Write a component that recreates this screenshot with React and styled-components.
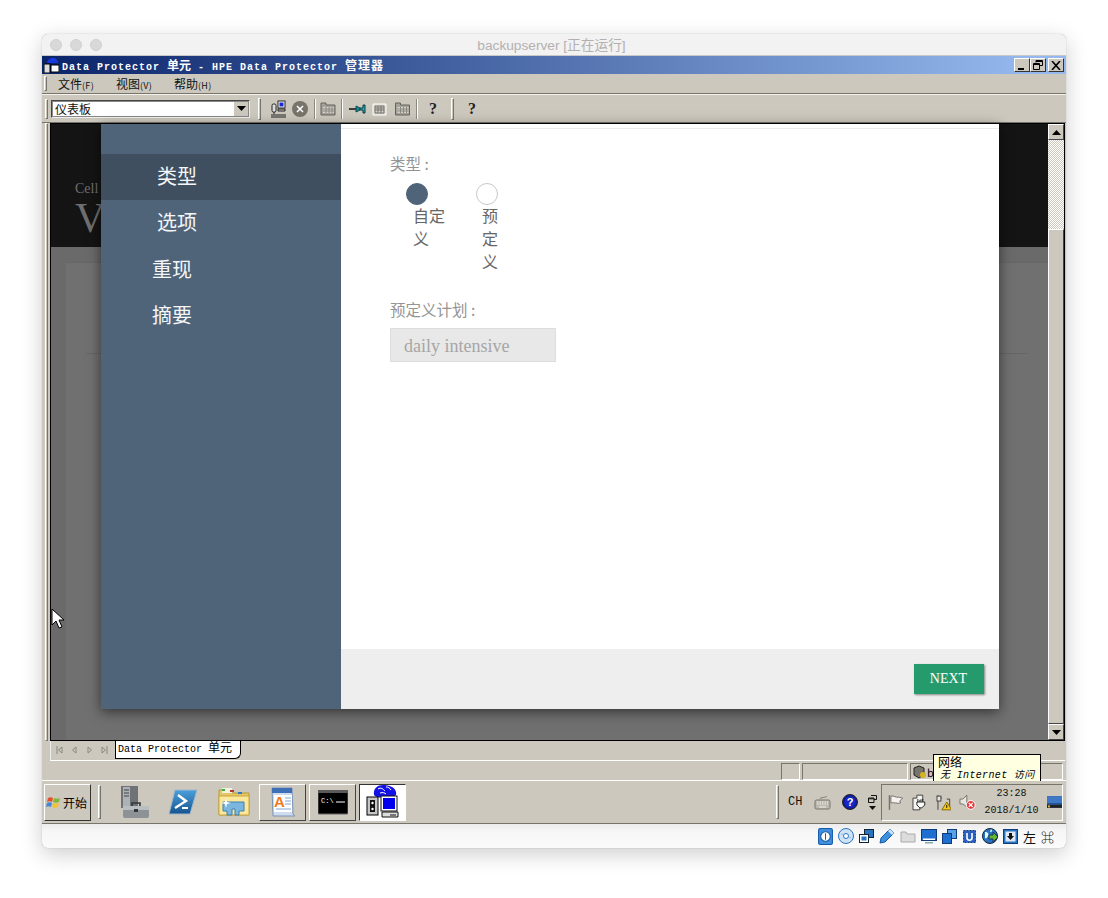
import React from 'react'
import styled, { createGlobalStyle } from 'styled-components'

const chrome = '#ccc8bd'
const cjk = '"Noto Sans CJK SC", "DejaVu Sans", sans-serif'
const serif = '"Liberation Serif", "Noto Sans CJK SC", serif'
const mono = '"Liberation Mono", "Noto Sans CJK SC", monospace'

const Global = createGlobalStyle`
html, body { margin: 0; padding: 0; background: #fff; }
body { width: 1108px; height: 898px; overflow: hidden; font-family: ${cjk}; }
* { box-sizing: border-box; }
`

const MacWindow = styled.div`
position: relative;
width: 1024px;
height: 814px;
margin: 34px 0 0 42px;
border-radius: 6px;
overflow: hidden;
box-shadow: 0 0 1px rgba(0,0,0,.35), 0 6px 22px rgba(0,0,0,.2);
display: flex;
flex-direction: column;
background: ${chrome};
`
const MacBar = styled.div`
height: 22px;
flex: none;
background: #f2f2f2;
border-bottom: 1px solid #c8c8c8;
display: flex;
align-items: center;
padding-left: 8px;
gap: 8px;
`
const Light = styled.span`
width: 12px;
height: 12px;
border-radius: 50%;
background: #d9d9d9;
border: 1px solid #cfcfcf;
`
const MacTitle = styled.div`
flex: 1;
text-align: center;
margin: -2px 73px 0 0;
font-size: 13.7px;
color: #b4b0b0;
font-family: "Liberation Sans", ${cjk};
`
const TitleBar = styled.div`
height: 18px;
flex: none;
background: linear-gradient(90deg, #0a246a 0%, #95b9ee 97%);
display: flex;
align-items: center;
padding: 0 2px;
`
const TitleText = styled.div`
flex: 1;
color: #fff;
font: bold 10px ${mono};
margin-left: 3px;
letter-spacing: 1px;
white-space: nowrap;
`
const CjkRun = styled.span`
font-size: 12px;
font-weight: ${p => (p.$normal ? 400 : 700)};
letter-spacing: ${p => p.$ls || 0}px;
`
const CaptionButton = styled.div`
width: 16px;
height: 14px;
margin-left: ${p => p.$gap || 0}px;
background: ${chrome};
border: 1px solid;
border-color: #fff #333 #333 #fff;
display: flex;
align-items: center;
justify-content: center;
`
const MenuBar = styled.div`
height: 20px;
flex: none;
border-bottom: 1px solid #77746c;
display: flex;
align-items: center;
font-size: 12px;
color: #111;
padding-left: 2px;
`
const Grip = styled.span`
width: 3px;
height: ${p => p.$h || 14}px;
flex: none;
border: 1px solid;
border-color: #fff #77746c #77746c #fff;
margin: 0 ${p => p.$right || 0}px 0 ${p => p.$left || 0}px;
`
const MenuItem = styled.span`
width: 58px;
white-space: nowrap;
small { font-size: 9px; letter-spacing: .3px; }
`
const ToolBar = styled.div`
height: 29px;
flex: none;
border-top: 1px solid #f4f2ea;
border-bottom: 1px solid #77746c;
display: flex;
align-items: center;
padding-left: 3px;
`
const Combo = styled.div`
width: 199px;
height: 18px;
margin-left: 3px;
background: #fff;
border: 1px solid;
border-color: #444 #eee #eee #444;
outline: 1px solid #888;
outline-offset: -2px;
display: flex;
justify-content: space-between;
align-items: center;
font-size: 12px;
color: #111;
padding-left: 3px;
`
const ComboArrow = styled.span`
width: 16px;
height: 16px;
background: ${chrome};
border: 1px solid;
border-color: #fff #333 #333 #fff;
display: flex;
align-items: center;
justify-content: center;
`
const ToolIcon = styled.span`
display: flex;
margin-left: ${p => p.$left}px;
`
const Divider = styled.span`
width: 2px;
height: 20px;
background: #8b887f;
border-right: 1px solid #fff;
margin-left: ${p => p.$left}px;
flex: none;
`
const Question = styled.span`
font: bold 16px "Liberation Serif", serif;
color: #222;
margin-left: ${p => p.$left}px;
line-height: 1;
`
const ViewRow = styled.div`
height: 618px;
flex: none;
display: flex;
padding-left: 3px;
padding-right: 1px;
`
const ViewGrip = styled.div`
width: 3px;
flex: none;
margin-right: 2px;
border: 1px solid;
border-color: #fff #77746c #77746c #fff;
`
const Screen = styled.div`
position: relative;
flex: 1;
display: flex;
flex-direction: column;
background: #6a6a6a;
border-left: 1px solid #000;
border-top: 1px solid #000;
border-bottom: 1px solid #000;
min-width: 0;
`
const PageHead = styled.div`
height: 123px;
flex: none;
background: #141414;
padding: 56px 0 0 24px;
font-family: ${serif};
color: #6f6f6f;
`
const PageCell = styled.div`
font-size: 14px;
line-height: 18px;
`
const PageTitle = styled.div`
font-size: 42px;
line-height: 41px;
`
const PagePanel = styled.div`
flex: 1;
margin: 15px 0 0 15px;
background: #707070;
border-top: 1px solid #666;
padding-top: 90px;
`
const PageRule = styled.div`
height: 1px;
margin: 0 20px;
background: #666;
`
const Modal = styled.div`
position: absolute;
left: 50px;
top: 0;
width: 898px;
height: 585px;
display: flex;
box-shadow: 0 3px 12px rgba(0,0,0,.55);
`
const Side = styled.div`
width: 240px;
flex: none;
background: #4f6479;
padding-top: 30px;
color: #f4f6f8;
font: 20px/46.3px ${serif};
`
const SideItem = styled.div`
height: 46.3px;
padding-left: ${p => (p.$active || p.$indent ? 56 : 51)}px;
background: ${p => (p.$active ? '#3f4f5f' : 'transparent')};
`
const Main = styled.div`
flex: 1;
display: flex;
flex-direction: column;
background: #fff;
`
const MainBody = styled.div`
flex: 1;
padding: 27px 0 0 49px;
position: relative;
&::before {
  content: "";
  position: absolute;
  left: 0;
  right: 0;
  top: 4px;
  height: 1px;
  background: #ececec;
}
`
const FieldLabel = styled.div`
font-size: 15.5px;
line-height: 24px;
color: #949494;
`
const RadioRow = styled.div`
display: flex;
margin: 8px 0 0 16px;
height: 114px;
`
const RadioOption = styled.div`
width: ${p => p.$w}px;
`
const RadioDot = styled.div`
width: 22px;
height: 22px;
border-radius: 50%;
background: ${p => (p.$on ? '#4f6479' : '#fff')};
border: 1px solid ${p => (p.$on ? '#4f6479' : '#c8c8c8')};
`
const RadioText = styled.div`
font-size: 16px;
line-height: 23px;
color: #666;
margin-top: -1px;
padding-left: ${p => p.$pad}px;
width: ${p => p.$tw}px;
`
const Select = styled.div`
width: 166px;
height: 34px;
margin-top: 7px;
background: #e8e8e8;
border: 1px solid #ddd;
padding-left: 13px;
font: 18px/34px ${serif};
color: #a6a6a6;
`
const Footer = styled.div`
height: 60px;
flex: none;
background: #eee;
display: flex;
justify-content: flex-end;
align-items: flex-start;
padding: 15px 15px 0 0;
`
const Next = styled.button`
width: 70px;
height: 30px;
border: 0;
background: #259b6d;
color: #fff;
font: 14px ${serif};
box-shadow: 1px 1px 2px rgba(0,0,0,.45);
padding: 0 1px 0 0;
`
const Cursor = styled.svg`
position: absolute;
left: 0;
top: 484px;
`
const ScrollBar = styled.div`
width: 17px;
flex: none;
display: flex;
flex-direction: column;
border-top: 1px solid #000;
border-bottom: 1px solid #000;
border-right: 1px solid #000;
`
const ScrollButton = styled.div`
height: 16px;
flex: none;
background: ${chrome};
border: 1px solid;
border-color: #fff #444 #444 #fff;
display: flex;
align-items: center;
justify-content: center;
`
const ScrollTrack = styled.div`
height: 89px;
flex: none;
background: repeating-conic-gradient(#ccc8bd 0 25%, #fff 0 50%) 0 0 / 2px 2px;
`
const ScrollThumb = styled.div`
flex: 1;
background: ${chrome};
border: 1px solid;
border-color: #fff #444 #444 #fff;
`
const TabRow = styled.div`
height: 20px;
flex: none;
display: flex;
margin-left: 8px;
margin-right: 1px;
border-left: 1px solid #eee;
border-bottom: 1px solid #fff;
align-items: flex-start;
`
const TabNav = styled.div`
width: 64px;
height: 18px;
display: flex;
align-items: center;
gap: 8px;
padding-left: 5px;
`
const Tab = styled.div`
width: 126px;
height: 18px;
background: #fff;
border: 1px solid #000;
border-top: 0;
border-bottom-right-radius: 6px;
font: 10px/17px ${mono};
color: #000;
padding-left: 2px;
white-space: nowrap;
`
const StatusRow = styled.div`
height: 20px;
flex: none;
display: flex;
align-items: flex-start;
padding: 2px 1px 0 739px;
border-bottom: 1px solid #fff;
position: relative;
`
const StatusCell = styled.div`
width: ${p => p.$w}px;
flex: ${p => (p.$grow ? 1 : 'none')};
height: 17px;
margin-right: 2px;
border: 1px solid;
border-color: #77746c #fff #fff #77746c;
display: flex;
align-items: center;
font-size: 11px;
padding-left: 2px;
overflow: hidden;
`
const Tooltip = styled.div`
position: absolute;
left: 891px;
top: -7px;
width: 108px;
height: 27px;
background: #ffffe1;
border: 1px solid #000;
border-bottom: 0;
font-size: 12px;
line-height: 14px;
padding-left: 4px;
color: #000;
white-space: nowrap;
overflow: hidden;
em { display: block; font: italic 10px/13px ${mono}, ${cjk}; padding-left: 2px; letter-spacing: .35px; }
`
const TaskBar = styled.div`
height: 43px;
flex: none;
border-bottom: 1px solid #77746c;
display: flex;
align-items: center;
padding-left: 2px;
`
const StartButton = styled.div`
width: 47px;
height: 37px;
background: ${chrome};
border: 1px solid;
border-color: #fff #333 #333 #fff;
display: flex;
align-items: center;
font-size: 12px;
color: #000;
padding-left: 1px;
gap: 1px;
`
const TaskSlot = styled.div`
width: ${p => p.$w || 47}px;
height: 37px;
margin-left: ${p => p.$left || 0}px;
flex: none;
display: flex;
align-items: center;
justify-content: center;
${p => p.$raised && 'border: 1px solid; border-color: #fff #444 #444 #fff;'}
${p => p.$pressed && 'background: #fff; border: 1px solid; border-color: #333 #fff #fff #333;'}
`
const TaskSep = styled.span`
width: 3px;
height: 34px;
flex: none;
margin-left: ${p => p.$left}px;
border: 1px solid;
border-color: #fff #77746c #77746c #fff;
`
const LangText = styled.span`
font: 12px ${mono};
margin-left: 9px;
color: #111;
`
const TrayBox = styled.div`
width: 182px;
height: 37px;
margin-left: 4px;
border: 1px solid;
border-color: #77746c #fff #fff #77746c;
display: flex;
align-items: center;
padding-left: 6px;
gap: 8px;
`
const Clock = styled.div`
width: 56px;
text-align: center;
font: 10px/17px ${mono};
color: #111;
white-space: nowrap;
`
const MiniGroup = styled.div`
display: flex;
flex-direction: column;
align-items: center;
margin-left: 10px;
gap: 3px;
`
const HostBar = styled.div`
flex: 1;
background: linear-gradient(#ececec, #f6f6f6 30%, #fbfbfb);
display: flex;
align-items: center;
justify-content: flex-end;
gap: 5px;
padding-right: 12px;
`
const HostKey = styled.span`
font-size: 13px;
color: #111;
`

const Arrow = ({ up }) => (
  <svg width="9" height="5" viewBox="0 0 9 5"><path d={up ? 'M4.5 0L9 5H0z' : 'M0 0h9L4.5 5z'} fill="#000" /></svg>
)

const PcIcon = () => (
  <svg width="15" height="18" viewBox="0 0 15 18" fill="none">
    <rect x="7" y="1" width="7" height="7" fill="#fff" stroke="#222" />
    <rect x="8.5" y="2.5" width="4" height="4" fill="#1c28d8" />
    <rect x="1" y="4" width="4" height="8" rx="1.5" fill="#ddd" stroke="#222" />
    <path d="M7 9h7v2H7zM3 12v2M0 15h15M0 17h15" stroke="#222" />
  </svg>
)
const StopIcon = () => (
  <svg width="16" height="16" viewBox="0 0 16 16">
    <circle cx="8" cy="8" r="8" fill="#77746c" />
    <path d="M5 5l6 6M11 5l-6 6" stroke="#fff" strokeWidth="1.6" />
  </svg>
)
const FolderGrid = ({ w = 16 }) => (
  <svg width={w} height="14" viewBox="0 0 16 14">
    <path d="M1 3V1h5v2h9v10H1z" fill="#a5a29a" stroke="#66635c" />
    <path d="M3 5h11v6H3z" fill="#d6d3cb" />
    <path d="M3 7h11M3 9h11M6 5v6M9 5v6M12 5v6" stroke="#8a877f" />
  </svg>
)
const PinIcon = () => (
  <svg width="17" height="10" viewBox="0 0 17 10">
    <path d="M0 5h7" stroke="#111" strokeWidth="1.5" />
    <path d="M7 2l4 2v2l-4 2z" fill="#138a96" stroke="#0c4a50" />
    <path d="M11 4h3V1h2v8h-2V6h-3z" fill="#20b2bd" stroke="#0a3a3e" />
  </svg>
)
const TableIcon = () => (
  <svg width="15" height="14" viewBox="0 0 15 14" fill="none">
    <path d="M1 2h13v11H1z" fill="#d6d3cb" stroke="#fff" />
    <path d="M3 4h9v7H3zM3 6h9M3 8h9M6 4v7M9 4v7" stroke="#77746c" />
  </svg>
)

const ServerCase = () => (
  <svg width="32" height="34" viewBox="0 0 32 34">
    <path d="M2 1h17v22H2z" fill="#6f7276" />
    <path d="M4 2h7v20H4z" fill="#aeb2b6" />
    <path d="M5 5h5M5 8h5M5 11h5" stroke="#3e4144" />
    <path d="M4 21h26v10a2 2 0 0 1-2 2H6a2 2 0 0 1-2-2z" fill="#8d9297" />
    <path d="M4 21h26v4H4z" fill="#b9bec2" />
    <path d="M13 21v-3h8v3" fill="none" stroke="#33363a" strokeWidth="1.6" />
    <rect x="15" y="24" width="4" height="3" fill="#33363a" />
  </svg>
)
const PowerShellIcon = () => (
  <svg width="30" height="26" viewBox="0 0 30 26">
    <defs>
      <linearGradient id="ps" x1="0" y1="0" x2="0" y2="1">
        <stop offset="0" stopColor="#4aa0dc" />
        <stop offset="1" stopColor="#15548f" />
      </linearGradient>
    </defs>
    <path d="M7 1h22l-7 24H1z" fill="url(#ps)" stroke="#9fb7cc" />
    <path d="M10 6l8 6-11 7" fill="none" stroke="#fff" strokeWidth="2.4" />
    <path d="M14 19h6" stroke="#fff" strokeWidth="2" />
  </svg>
)
const ExplorerIcon = () => (
  <svg width="32" height="30" viewBox="0 0 32 30">
    <path d="M1 3h11l2 3h17v22H1z" fill="#e6c765" stroke="#b79a3c" />
    <path d="M4 1h10v5H4z" fill="#f6f2e2" />
    <path d="M4 2h3v2H4z" fill="#3fae3c" />
    <path d="M12 3h4v2h-4z" fill="#b23a2c" />
    <path d="M20 5h4v2h-4z" fill="#2c79c9" />
    <path d="M1 9h30v19H1z" fill="#fbe89b" stroke="#c7a540" />
    <path d="M5 24v-9h21v9h-5v4h-4v-6h-3v6H9v-4z" fill="#7bb6df" stroke="#3d7fb3" />
    <path d="M8 11l1 4 4 1-4 1-1 4-1-4-4-1 4-1z" fill="#fff" />
  </svg>
)
const FontDocIcon = () => (
  <svg width="26" height="30" viewBox="0 0 26 30">
    <path d="M2 1h20l1 26 2 2H3z" fill="#cfdcf0" stroke="#7a93b8" />
    <path d="M2 1h20v5H2z" fill="#3c6fb5" />
    <path d="M4 8h18v17H4z" fill="#fff" />
    <text x="4" y="20" fontFamily="Liberation Sans, sans-serif" fontWeight="bold" fontSize="15" fill="#ee7b1d">A</text>
    <path d="M15 11h6M15 14h6M15 17h6M6 22h15" stroke="#7ea5d8" />
  </svg>
)
const CmdIcon = () => (
  <svg width="30" height="25" viewBox="0 0 30 25">
    <rect x="0" y="0" width="30" height="24" rx="1" fill="#000" stroke="#666" />
    <path d="M0 0h30v3H0z" fill="#5a5a5a" />
    <text x="3" y="13" fontFamily="Liberation Mono, monospace" fontSize="7" fill="#fff">C:\</text>
    <path d="M18 12h9" stroke="#fff" />
  </svg>
)
const DpIcon = () => (
  <svg width="34" height="34" viewBox="0 0 34 34">
    <path d="M8 10C7 3 12 0 17 0c6 0 12 2 13 7 1 4-2 5-6 5-5 0-13 2-16-2z" fill="#1212e6" />
    <path d="M12 4c3-2 5 0 7 2M14 8c3-1 5 0 6 1M20 2c2 0 4 1 5 3" stroke="#fff" fill="none" />
    <rect x="1" y="12" width="11" height="18" fill="#c6c6c6" stroke="#000" />
    <rect x="4" y="15" width="5" height="12" fill="#111" />
    <circle cx="6.5" cy="18" r="1.2" fill="#fff" />
    <circle cx="6.5" cy="24" r="1.2" fill="#fff" />
    <rect x="15" y="11" width="16" height="15" fill="#fff" stroke="#111" />
    <rect x="17" y="13" width="12" height="11" fill="#0000ee" />
    <path d="M16 27h16v5H16z" fill="#ddd" stroke="#111" />
    <path d="M24 30h6" stroke="#111" />
  </svg>
)
const StartFlag = () => (
  <svg width="16" height="15" viewBox="0 0 16 15">
    <path d="M2 3c2-1 3-1 5 0L6 7C4 6 3 6 1 7z" fill="#e5502a" />
    <path d="M8 3c2 1 4 1 6 0l-1 4c-2 1-4 1-6 0z" fill="#7fb738" />
    <path d="M1 8c2-1 3-1 5 0l-1 4c-2-1-3-1-5 0z" fill="#3d88d8" />
    <path d="M7 8c2 1 4 1 6 0l-1 4c-2 1-4 1-6 0z" fill="#f3c22e" />
  </svg>
)
const KeyboardIcon = () => (
  <svg width="17" height="15" viewBox="0 0 17 15" fill="none">
    <path d="M6 4c0-2 6-1 7-3" stroke="#807d75" />
    <rect x="1" y="5" width="15" height="9" rx="1.5" fill="#bbb8af" stroke="#77746c" />
    <path d="M3 7h11M3 9h11" stroke="#f0eee8" strokeDasharray="1.5 1" />
    <path d="M5 12h7" stroke="#f0eee8" />
  </svg>
)
const HelpDisc = () => (
  <svg width="16" height="16" viewBox="0 0 16 16">
    <circle cx="8" cy="8" r="7.5" fill="#101c9c" stroke="#222" />
    <circle cx="8" cy="8" r="5.5" fill="#1828c4" />
    <text x="8" y="12" textAnchor="middle" fontFamily="Liberation Sans, sans-serif" fontWeight="bold" fontSize="11" fill="#fff">?</text>
  </svg>
)
const RestoreMini = () => (
  <svg width="9" height="8" viewBox="0 0 9 8" fill="none" stroke="#111">
    <path d="M3 .5h5.500v4H6M.5 3h5.500v4.500H.5zM.5 3.800h5.500" />
  </svg>
)
const FlagTray = () => (
  <svg width="16" height="17" viewBox="0 0 16 17">
    <path d="M1.500 1v15" stroke="#77746c" strokeWidth="1.500" />
    <path d="M3 2c3-1 5 2 8 1l4 1-3 3 1 2c-3 1-7-1-10 0z" fill="#f4f3ef" stroke="#77746c" />
  </svg>
)
const PlugTray = () => (
  <svg width="16" height="17" viewBox="0 0 16 17">
    <path d="M1 4h4V1h6v5H8v10H1z" fill="#f4f3ef" stroke="#444" />
    <path d="M6 5v3M11 5v3M5 8h8v3l-3 3H8l-3-3z" fill="#fff" stroke="#222" />
  </svg>
)
const NetTray = () => (
  <svg width="16" height="17" viewBox="0 0 16 17">
    <path d="M2 1v15M2 4h4M11 5h3v9" stroke="#444" fill="none" />
    <rect x="1" y="2" width="4" height="5" fill="#e8e6df" stroke="#444" />
    <path d="M11 8l5 8H6z" fill="#f6c81c" stroke="#8a6c00" />
    <path d="M11 11v3" stroke="#111" />
  </svg>
)
const SoundTray = () => (
  <svg width="17" height="16" viewBox="0 0 17 16">
    <path d="M1 5h3l4-4v12L4 10H1z" fill="#e8e6df" stroke="#77746c" />
    <circle cx="12" cy="11" r="4.500" fill="#e33b3b" stroke="#fff" />
    <path d="M10 9l4 4M14 9l-4 4" stroke="#fff" strokeWidth="1.200" />
  </svg>
)
const DesktopTray = () => (
  <svg width="16" height="12" viewBox="0 0 16 12">
    <rect width="16" height="12" fill="#27508f" />
    <path d="M0 0h16v7H0z" fill="#3f78c6" />
    <path d="M0 9h16v3H0z" fill="#222" />
    <rect x="1" y="9.500" width="2" height="2" fill="#e8b53c" />
  </svg>
)

// host status icons
const HostDisk = () => (
  <svg width="15" height="17" viewBox="0 0 14 16">
    <rect x=".5" y=".5" width="13" height="15" rx="1.500" fill="#3f8fdc" stroke="#1259a8" />
    <circle cx="7" cy="8" r="4.500" fill="#fff" stroke="#1259a8" />
    <path d="M7 5v6" stroke="#1259a8" />
  </svg>
)
const HostCd = () => (
  <svg width="16" height="16" viewBox="0 0 16 16">
    <circle cx="8" cy="8" r="7.500" fill="#cfe3f7" stroke="#2a73c0" />
    <circle cx="8" cy="8" r="2.500" fill="#fff" stroke="#2a73c0" />
    <path d="M3 6l3 1M13 10l-3-1" stroke="#8cb9e6" />
  </svg>
)
const HostNet = () => (
  <svg width="15" height="15" viewBox="0 0 15 15">
    <rect x="5.500" y=".5" width="9" height="8" fill="#2a73c0" stroke="#123" />
    <rect x=".5" y="5.500" width="9" height="8" fill="#fff" stroke="#123" />
    <rect x="2.500" y="7.500" width="5" height="4" fill="#2a73c0" />
  </svg>
)
const HostPen = () => (
  <svg width="16" height="16" viewBox="0 0 16 16">
    <path d="M11 1l4 4-9 9-5 1 1-5z" fill="#3f8fdc" stroke="#1259a8" />
    <path d="M11 1l4 4-2 2-4-4z" fill="#cfe3f7" />
  </svg>
)
const HostFolder = () => (
  <svg width="16" height="13" viewBox="0 0 16 13">
    <path d="M1 2h5l1 2h8v8H1z" fill="#dcdcdc" stroke="#aaa" />
  </svg>
)
const HostScreen = () => (
  <svg width="16" height="15" viewBox="0 0 16 15">
    <rect x=".5" y=".5" width="15" height="11" fill="#1f6fd0" stroke="#0e3c7a" />
    <rect x="2" y="9.500" width="12" height="1.500" fill="#fff" />
    <path d="M4 13h8v1.500H4z" fill="#8aa" />
  </svg>
)
const HostWindows = () => (
  <svg width="15" height="15" viewBox="0 0 15 15">
    <rect x="5.500" y=".5" width="9" height="9" fill="#5aa0e6" stroke="#0e3c7a" />
    <rect x=".5" y="4.500" width="9" height="10" fill="#1f6fd0" stroke="#0e3c7a" />
  </svg>
)
const HostChip = () => (
  <svg width="15" height="15" viewBox="0 0 15 15">
    <rect x="1.500" y="1.500" width="12" height="12" fill="#2a5fc0" stroke="#0e3c7a" strokeDasharray="2 1" />
    <path d="M5 4v5c0 3 5 3 5 0V4" fill="none" stroke="#fff" strokeWidth="1.600" />
  </svg>
)
const HostGlobe = () => (
  <svg width="16" height="16" viewBox="0 0 16 16">
    <circle cx="8" cy="8" r="7.500" fill="#2a73c0" stroke="#123" />
    <path d="M3 4c3 0 4 2 3 4s-2 3-3 2M9 1c2 2 1 3-1 3" fill="#dff" />
    <path d="M7 7h4V4l5 5-5 5v-3H7z" fill="#62b82c" stroke="#235" />
  </svg>
)
const HostDown = () => (
  <svg width="15" height="15" viewBox="0 0 15 15">
    <rect x=".5" y=".5" width="14" height="14" fill="#2a73c0" stroke="#0e3c7a" />
    <rect x="2.500" y="2.500" width="10" height="10" fill="#dfe9f5" />
    <path d="M6 4h3v3h2l-3.500 4L4 7h2z" fill="#111" />
  </svg>
)

const TabArrow = ({ d }) => (
  <svg width="7" height="8" viewBox="0 0 7 8" fill="none" stroke="#8b887f"><path d={d} /></svg>
)

export default function App() {
  return (
    <>
      <Global />
      <MacWindow>
        <MacBar>
          <Light /><Light /><Light />
          <MacTitle>backupserver [正在运行]</MacTitle>
        </MacBar>

        <TitleBar>
          <svg width="15" height="15" viewBox="0 0 15 15">
            <path d="M3 6C3 2 6 0 9 0c3 0 5 2 5 5H3z" fill="#1a3ae0" />
            <rect x="0" y="6" width="6" height="9" fill="#ddd" stroke="#000" />
            <rect x="7" y="7" width="8" height="7" fill="#fff" stroke="#000" />
          </svg>
          <TitleText>Data Protector <CjkRun>单元</CjkRun> - HPE Data Protector <CjkRun $ls={1}>管理器</CjkRun></TitleText>
          <CaptionButton>
            <svg width="10" height="10" viewBox="0 0 10 10"><path d="M1 8h6v2H1z" fill="#000" /></svg>
          </CaptionButton>
          <CaptionButton>
            <svg width="10" height="10" viewBox="0 0 10 10" fill="none" stroke="#000"><path d="M3 2.500V.5h6.500v5H7M.5 3.500h6v6h-6zM.5 4.500h6M3 1.500h6.500" /></svg>
          </CaptionButton>
          <CaptionButton $gap={2}>
            <svg width="10" height="9" viewBox="0 0 10 9"><path d="M1 0l8 9M9 0L1 9" stroke="#000" strokeWidth="1.600" /></svg>
          </CaptionButton>
        </TitleBar>

        <MenuBar>
          <Grip $h={15} $right={11} />
          <MenuItem>文件<small>(F)</small></MenuItem>
          <MenuItem>视图<small>(V)</small></MenuItem>
          <MenuItem>帮助<small>(H)</small></MenuItem>
        </MenuBar>

        <ToolBar>
          <Grip $h={20} />
          <Combo>
            仪表板
            <ComboArrow><Arrow /></ComboArrow>
          </Combo>
          <Grip $h={22} $left={8} />
          <ToolIcon $left={10}><PcIcon /></ToolIcon>
          <ToolIcon $left={6}><StopIcon /></ToolIcon>
          <Divider $left={6} />
          <ToolIcon $left={4}><FolderGrid /></ToolIcon>
          <Divider $left={5} />
          <ToolIcon $left={6}><PinIcon /></ToolIcon>
          <ToolIcon $left={6}><TableIcon /></ToolIcon>
          <ToolIcon $left={7}><FolderGrid w={17} /></ToolIcon>
          <Divider $left={5} />
          <Question $left={11}>?</Question>
          <Grip $h={22} $left={14} />
          <Question $left={14}>?</Question>
        </ToolBar>

        <ViewRow>
          <ViewGrip />
          <Screen>
            <PageHead>
              <PageCell>Cell</PageCell>
              <PageTitle>V</PageTitle>
            </PageHead>
            <PagePanel>
              <PageRule />
            </PagePanel>

            <Modal>
              <Side>
                <SideItem $active>类型</SideItem>
                <SideItem $indent>选项</SideItem>
                <SideItem>重现</SideItem>
                <SideItem>摘要</SideItem>
              </Side>
              <Main>
                <MainBody>
                  <FieldLabel>类型 :</FieldLabel>
                  <RadioRow>
                    <RadioOption $w={70}>
                      <RadioDot $on />
                      <RadioText $pad={7} $tw={41}>自定义</RadioText>
                    </RadioOption>
                    <RadioOption $w={30}>
                      <RadioDot />
                      <RadioText $pad={6} $tw={24}>预定义</RadioText>
                    </RadioOption>
                  </RadioRow>
                  <FieldLabel>预定义计划 :</FieldLabel>
                  <Select>daily intensive</Select>
                </MainBody>
                <Footer>
                  <Next>NEXT</Next>
                </Footer>
              </Main>
            </Modal>

            <Cursor width="13" height="21" viewBox="0 0 13 21">
              <path d="M1 1v16l4-4 3 7 3-1-3-7h5z" fill="#fff" stroke="#000" />
            </Cursor>
          </Screen>
          <ScrollBar>
            <ScrollButton><Arrow up /></ScrollButton>
            <ScrollTrack />
            <ScrollThumb />
            <ScrollButton><Arrow /></ScrollButton>
          </ScrollBar>
        </ViewRow>

        <TabRow>
          <TabNav>
            <TabArrow d="M1 0v8M6 1L2.500 4 6 7z" />
            <TabArrow d="M5 1L1.500 4 5 7z" />
            <TabArrow d="M2 1l3.500 3L2 7z" />
            <TabArrow d="M6 0v8M1 1l3.500 3L1 7z" />
          </TabNav>
          <Tab>Data Protector <CjkRun $normal>单元</CjkRun></Tab>
        </TabRow>

        <StatusRow>
          <StatusCell $w={19} />
          <StatusCell $w={106} />
          <StatusCell $grow>
            <svg width="14" height="14" viewBox="0 0 14 14">
              <path d="M1 3l5-2 5 2v7l-5 3-5-3z" fill="#77746c" stroke="#222" />
              <circle cx="10" cy="10" r="3" fill="#d6b21c" />
            </svg>
            b
          </StatusCell>
          <Tooltip>
            网络
            <em>无 Internet 访问</em>
          </Tooltip>
        </StatusRow>

        <TaskBar>
          <StartButton>
            <StartFlag />
            开始
          </StartButton>
          <TaskSep $left={7} />
          <TaskSlot $w={46} $left={11}><ServerCase /></TaskSlot>
          <TaskSlot $w={46} $left={2}><PowerShellIcon /></TaskSlot>
          <TaskSlot $w={50} $left={3}><ExplorerIcon /></TaskSlot>
          <TaskSlot $raised><FontDocIcon /></TaskSlot>
          <TaskSlot $raised $left={3}><CmdIcon /></TaskSlot>
          <TaskSlot $pressed $left={3}><DpIcon /></TaskSlot>
          <TaskSep $left={370} />
          <LangText>CH</LangText>
          <ToolIcon $left={12}><KeyboardIcon /></ToolIcon>
          <ToolIcon $left={11}><HelpDisc /></ToolIcon>
          <MiniGroup>
            <RestoreMini />
            <svg width="7" height="4" viewBox="0 0 7 4"><path d="M0 0h7L3.500 4z" fill="#111" /></svg>
          </MiniGroup>
          <TrayBox>
            <FlagTray />
            <PlugTray />
            <NetTray />
            <SoundTray />
            <Clock>23:28<br />2018/1/10</Clock>
            <DesktopTray />
          </TrayBox>
        </TaskBar>

        <HostBar>
          <HostDisk />
          <HostCd />
          <HostNet />
          <HostPen />
          <HostFolder />
          <HostScreen />
          <HostWindows />
          <HostChip />
          <HostGlobe />
          <HostDown />
          <HostKey>左</HostKey>
          <HostKey>⌘</HostKey>
        </HostBar>
      </MacWindow>
    </>
  )
}
